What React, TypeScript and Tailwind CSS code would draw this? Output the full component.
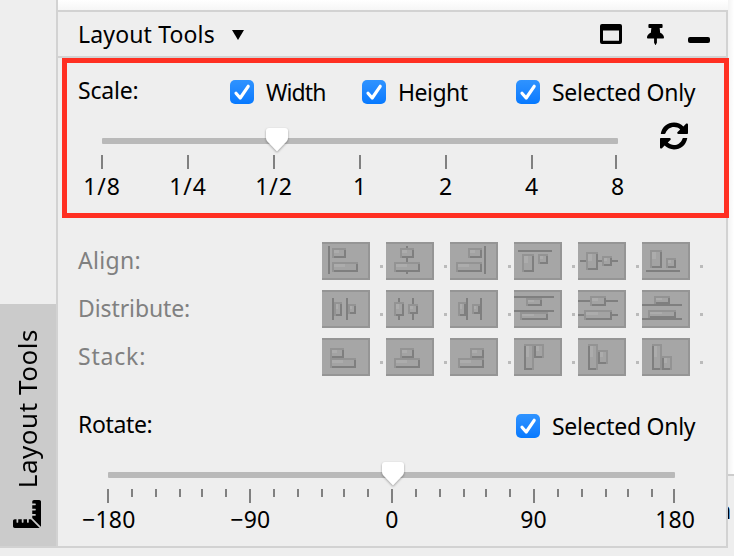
import React from "react";
import { FaRulerCombined, FaThumbtack } from "react-icons/fa";

const C = ({ children, cls }: { children: React.ReactNode; cls: string }) => (
  <span className={"block whitespace-nowrap leading-[28px] " + cls}>{children}</span>
);

function Check() {
  return (
    <span className="block h-6 w-6 shrink-0 rounded-[5px] bg-linear-to-b from-[#2f93ff] to-[#0579ff]">
      <svg viewBox="0 0 24 24" className="h-6 w-6" fill="none" stroke="#fff" strokeWidth="3.2" strokeLinecap="round" strokeLinejoin="round">
        <path d="M6 13.2 L10.2 18 L18.2 6.3" />
      </svg>
    </span>
  );
}

function Thumb() {
  return (
    <svg viewBox="0 0 28 30" className="h-[30px] w-[28px] drop-shadow-[0_1px_1px_rgba(0,0,0,0.35)]">
      <path d="M3 6 Q3 3 6 3 H22 Q25 3 25 6 V13 Q25 15 23.6 16.6 L14 26.5 L4.4 16.6 Q3 15 3 13 Z" fill="#fff" />
    </svg>
  );
}

type Rect = [number, number, number, number];
type Icon = { lines: Rect[]; boxes: Rect[]; leftDark?: boolean };
const rows: { label: string; cls: string; icons: Icon[] }[] = [
  {
    label: "Align:",
    cls: "tracking-[0.3px]",
    icons: [
      { lines: [[6, 4, 2, 28]], boxes: [[10, 6, 14, 10], [10, 20, 26, 10]] },
      { lines: [[20, 4, 2, 28]], boxes: [[14, 6, 14, 10], [8, 20, 26, 10]] },
      { lines: [[34, 4, 2, 28]], boxes: [[18, 6, 14, 10], [6, 20, 26, 10]] },
      { lines: [[4, 8, 34, 2]], boxes: [[8, 12, 12, 18], [24, 12, 10, 10]] },
      { lines: [[2, 18, 38, 2]], boxes: [[8, 10, 12, 18], [24, 14, 10, 10]] },
      { lines: [[4, 28, 34, 2]], boxes: [[8, 8, 12, 18], [24, 16, 10, 10]] },
    ],
  },
  {
    label: "Distribute:",
    cls: "tracking-[-0.1px]",
    icons: [
      { lines: [[10, 8, 2, 22], [24, 8, 2, 22]], boxes: [[12, 12, 8, 14], [26, 14, 8, 10]] },
      { lines: [[12, 8, 2, 22], [26, 8, 2, 22]], boxes: [[8, 12, 10, 14], [22, 14, 10, 10]] },
      { lines: [[16, 8, 2, 22], [30, 8, 2, 22]], boxes: [[8, 12, 8, 14], [22, 14, 8, 10]] },
      { lines: [[0, 6, 40, 2], [0, 20, 40, 2]], boxes: [[12, 8, 16, 8], [6, 22, 28, 8]] },
      { lines: [[0, 10, 40, 2], [0, 24, 40, 2]], boxes: [[12, 6, 16, 10], [6, 20, 28, 10]] },
      { lines: [[0, 14, 40, 2], [0, 28, 40, 2]], boxes: [[12, 6, 16, 8], [6, 20, 28, 8]] },
    ],
  },
  {
    label: "Stack:",
    cls: "tracking-[0.8px]",
    icons: [
      { lines: [], boxes: [[8, 10, 14, 10], [8, 20, 26, 10]] },
      { lines: [], boxes: [[14, 10, 14, 10], [8, 20, 26, 10]] },
      { lines: [], boxes: [[20, 10, 14, 10], [8, 20, 26, 10]] },
      { lines: [], boxes: [[10, 6, 10, 26], [20, 6, 10, 14]], leftDark: true },
      { lines: [], boxes: [[10, 6, 10, 26], [20, 12, 10, 14]], leftDark: true },
      { lines: [], boxes: [[10, 6, 10, 26], [20, 18, 10, 14]], leftDark: true },
    ],
  },
];

function ToolIcon({ icon }: { icon: Icon }) {
  return (
    <svg width="48" height="38" shapeRendering="crispEdges" className="block shrink-0">
      <rect width="48" height="38" fill="#959595" />
      <rect y="2" width="46" height="34" fill="#a6a6a6" />
      {icon.lines.map(([x, y, w, h], i) => (
        <rect key={i} x={x} y={y} width={w} height={h} fill="#7f7f7f" />
      ))}
      {icon.boxes.map(([x, y, w, h], i) => (
        <g key={i}>
          <rect x={x} y={y} width={w} height={h} fill="#939393" />
          <rect x={icon.leftDark ? x : x + w - 2} y={y + 2} width="2" height={h - 2} fill="#7f7f7f" />
          <rect x={icon.leftDark ? x : x + 2} y={y + h - 2} width={w - 2} height="2" fill="#7f7f7f" />
          <rect x={x + 2} y={y + 2} width={w - 4} height={h - 4} fill="#a3a3a3" />
          <rect x={x + 2} y={y + 2} width={(w - 4) / 2} height={(h - 4) / 2} fill="#acacac" />
        </g>
      ))}
    </svg>
  );
}

const scaleTicks = [101, 187, 273, 359, 445, 531, 615];
const scaleLabels = ["1/8", "1/4", "1/2", "1", "2", "4", "8"];
const rotTicks = [107, 131, 155, 179, 201, 225, 249, 273, 297, 321, 343, 367, 391, 415, 439, 463, 485, 509, 533, 557, 581, 605, 627, 651, 673];
const rotLabels = ["−180", "−90", "0", "90", "180"];

function Ticks({ xs, major }: { xs: number[]; major: number }) {
  return (
    <div className="flex h-[14px] items-start">
      {xs.map((x, i) => (
        <span
          key={x}
          className={"w-[2px] shrink-0 bg-[#808080] " + (i % major === 0 ? "h-[14px]" : "h-[8px]")}
          style={{ marginLeft: i ? x - xs[i - 1] - 2 : x - 58 }}
        />
      ))}
    </div>
  );
}

export default function App() {
  return (
    <div className="relative flex h-[556px] w-[734px] overflow-hidden bg-[#eeeeee] font-['Noto_Sans','Open_Sans',sans-serif] text-[23px] text-black">
      <aside className="flex w-[56px] shrink-0 flex-col">
        <div className="h-[304px]" />
        <div className="flex h-[242px] flex-col items-center bg-[#cbcbcb]">
          <div className="flex h-[184px] w-full items-start justify-start pt-[25px] pl-[11px]">
            <span className="rotate-180 whitespace-nowrap text-[26px] leading-[32px] tracking-[0.55px] [writing-mode:vertical-rl]">Layout Tools</span>
          </div>
          <FaRulerCombined className="mt-[12px] mr-[2px] h-7 w-7 -rotate-90" />
        </div>
        <div className="h-[2px] bg-[#d2d2d2]" />
      </aside>

      <main className="flex w-[672px] shrink-0 flex-col">
        <div className="h-[10px] border-l-2 border-[#d2d2d2] bg-linear-to-b from-white to-[#f6f6f6]" />
        <section className="flex h-[538px] flex-col border-2 border-[#d2d2d2]">
          <header className="flex h-[46px] items-center border-b-2 border-[#d2d2d2] pl-5">
            <C cls="w-[154px] tracking-[0.15px]">Layout Tools</C>
            <svg viewBox="0 0 12 10" className="mt-px h-[10px] w-[12px]"><path d="M0 0H12L6 10Z" /></svg>
            <div className="ml-auto flex items-center pr-[16px]">
              <svg viewBox="0 0 22 20" className="h-[20px] w-[22px]">
                <path fillRule="evenodd" d="M2 0H20Q22 0 22 2V18Q22 20 20 20H2Q0 20 0 18V2Q0 0 2 0ZM3 6.5V16.8H19V6.5Z" />
              </svg>
              <FaThumbtack preserveAspectRatio="none" className="ml-[25px] h-[21px] w-[17px]" />
              <span className="mt-3 ml-6 h-[6px] w-[22px] rounded-[2px] bg-black" />
            </div>
          </header>

          <div className="flex h-[160px] flex-col">
            <div className="flex h-[48px] items-center pt-[20px] pl-5">
              <C cls="-mt-[5px] w-[152px] tracking-[-0.2px]">Scale:</C>
              <Check />
              <C cls="ml-[12px] w-[96px] tracking-[-0.9px]">Width</C>
              <Check />
              <C cls="ml-[12px] w-[118px] tracking-[-0.5px]">Height</C>
              <Check />
              <C cls="ml-[12px] tracking-[-0.27px]">Selected Only</C>
            </div>
            <div className="flex h-[49px] items-start">
              <div className="relative mt-[32px] ml-[44px] h-[6px] w-[516px] rounded-[1px] bg-[#b9b9b9]">
                <div className="absolute -top-[13px] left-[161px]"><Thumb /></div>
              </div>
              <svg viewBox="0 0 28 28" className="mt-[16px] ml-[42px] h-7 w-7">
                <path id="turn" d="M0.8 11.6 C2 5 7.5 0.6 14 0.6 C17.8 0.6 21 2 23.4 4.4 L26 1.8 C26.8 1 28 1.5 28 2.6 V11 C28 11.7 27.6 12 27 12 H18.4 C17.3 12 16.8 10.8 17.6 10.1 L20.2 7.4 C18.5 5.8 16.4 5 14 5 C10.2 5 7.1 7.3 5.7 10.8 C5.5 11.4 5.2 12 4.5 12 H1.2 C0.9 12 0.7 11.9 0.8 11.6 Z" />
                <use href="#turn" transform="rotate(180 14 14)" />
              </svg>
            </div>
            <Ticks xs={scaleTicks} major={1} />
            <div className="mt-[3px] ml-[1px] flex">
              {scaleLabels.map((t) => (
                <C key={t} cls="w-[86px] shrink-0 text-center tracking-[0.8px]">{t}</C>
              ))}
            </div>
          </div>

          <div className="flex flex-col gap-[10px] pt-[24px] pl-5">
            {rows.map((r) => (
              <div key={r.label} className="flex h-[38px] items-center">
                <C cls={"-mt-[2px] w-[244px] text-[#808080] " + r.cls}>{r.label}</C>
                {r.icons.map((icon, i) => (
                  <div key={i} className="flex items-center">
                    <ToolIcon icon={icon} />
                    <span className="mt-[11px] mr-[3px] ml-[10px] h-[3px] w-[3px] bg-[#bbbbbb]" />
                  </div>
                ))}
              </div>
            ))}
          </div>

          <div className="flex h-[96px] flex-col">
            <div className="mt-[36px] flex h-[28px] items-center pl-5">
              <C cls="w-[438px] -mt-[5px] tracking-[-0.35px]">Rotate:</C>
              <Check />
              <C cls="ml-[12px] tracking-[-0.27px]">Selected Only</C>
            </div>
            <div className="relative mt-[32px] ml-[50px] h-[6px] w-[567px] shrink-0 rounded-[1px] bg-[#b9b9b9]">
              <div className="absolute -top-[13px] left-[271px]"><Thumb /></div>
            </div>
            <div className="mt-[11px]"><Ticks xs={rotTicks} major={6} /></div>
            <div className="mt-[2px] -ml-[20px] flex">
              {rotLabels.map((t) => (
                <C key={t} cls="w-[141.6px] shrink-0 text-center tracking-[0.2px]">{t}</C>
              ))}
            </div>
          </div>
        </section>
      </main>

      <div className="flex grow flex-col overflow-hidden">
        <div className="h-[474px] bg-linear-to-r from-[#f3f3f3] to-white" />
        <div className="h-[74px] border-t-2 border-[#cccccc] bg-[#eeeeee] pt-[20px]">
          <C cls="-ml-[11px]">n</C>
        </div>
      </div>

      <div className="absolute top-[58px] left-[62px] h-[160px] w-[667px] border-[5px] border-[#ff2f22]" />
    </div>
  );
}
